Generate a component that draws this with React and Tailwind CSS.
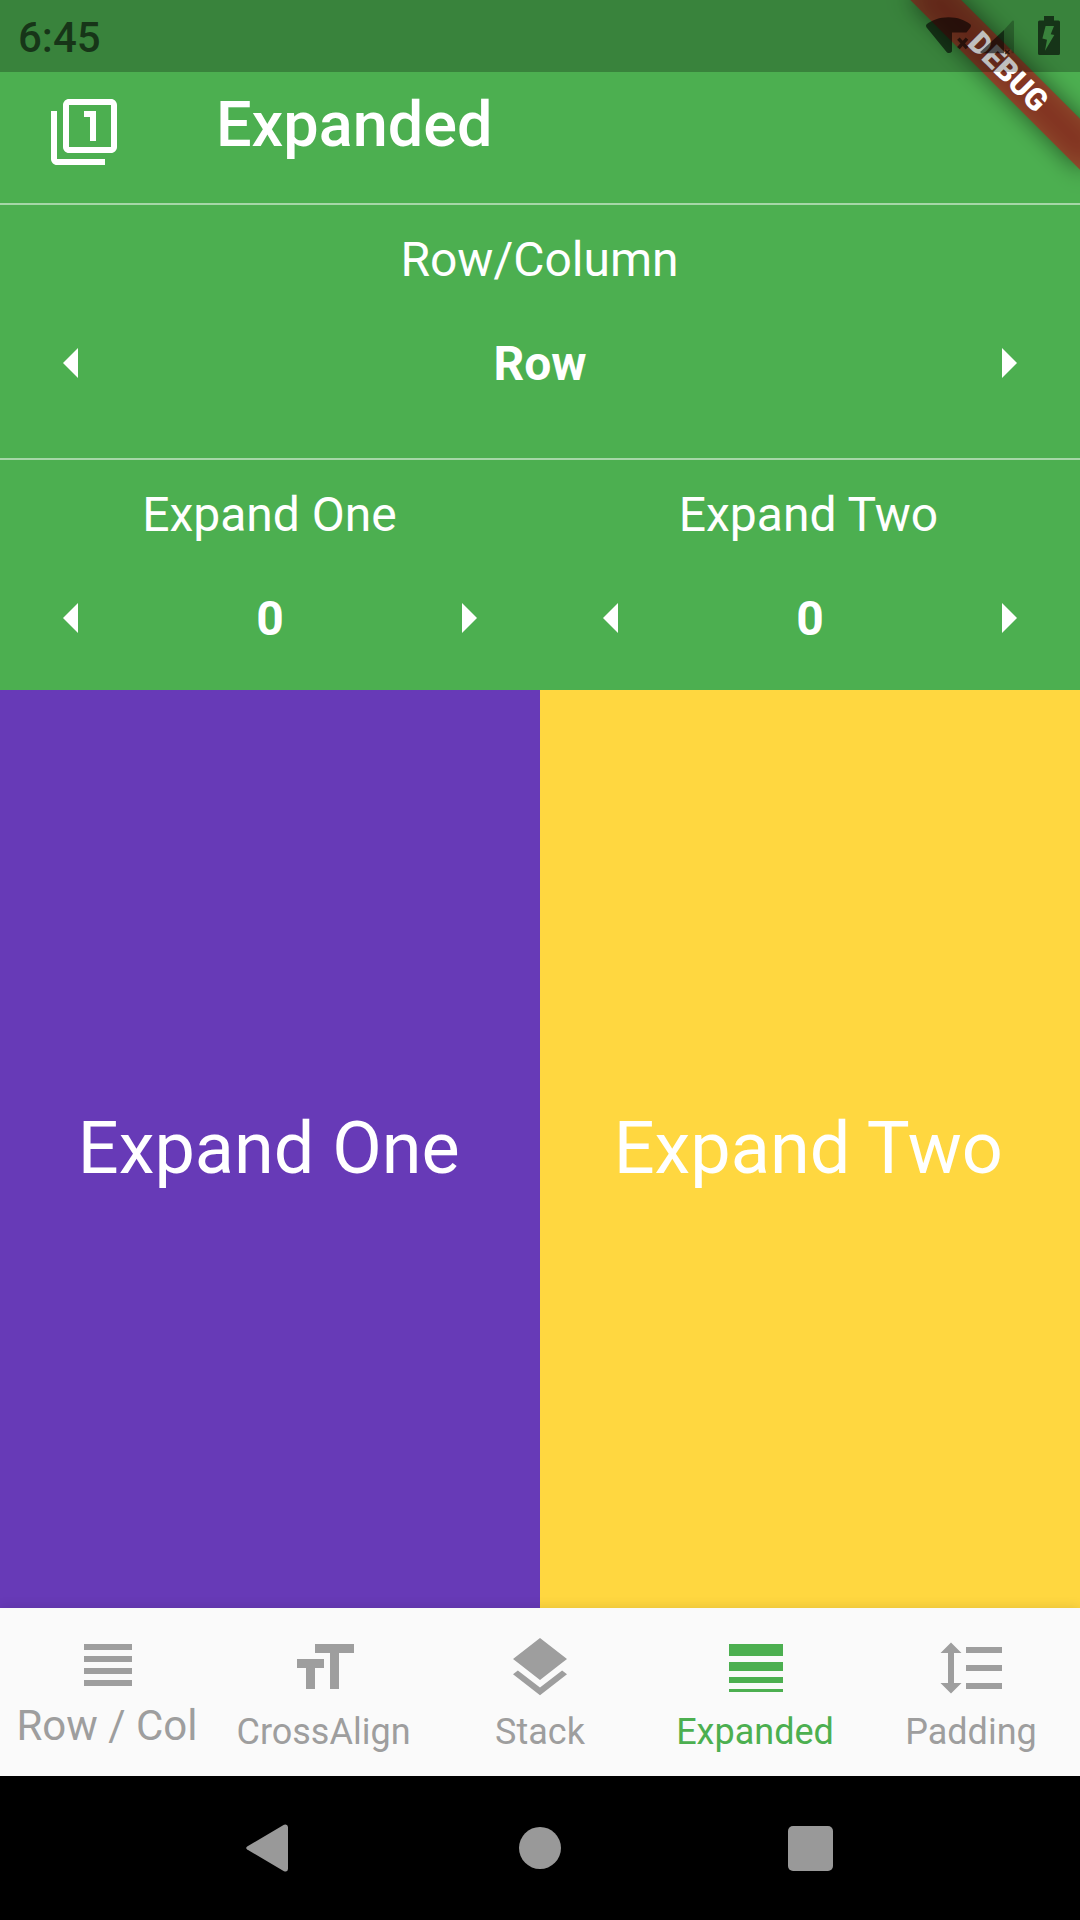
import React from "react";

const ICONS = {
  filterOne:
    "M3 5H1v16c0 1.1.9 2 2 2h16v-2H3V5zm11 10h2V5h-4v2h2v8zm7-14H7c-1.1 0-2 .9-2 2v14c0 1.1.9 2 2 2h14c1.1 0 2-.9 2-2V3c0-1.1-.9-2-2-2zm0 16H7V3h14v14z",
  arrowLeft: "M14 7l-5 5 5 5V7z",
  arrowRight: "M10 17l5-5-5-5v10z",
  headline: "M4 15h16v-2H4v2zm0 4h16v-2H4v2zm0-8h16V9H4v2zm0-6v2h16V5H4z",
  formatSize: "M9 4v3h5v12h3V7h5V4H9zm-6 8h3v7h3v-7h3V9H3v3z",
  layers:
    "M11.99 18.54l-7.37-5.73L3 14.07l9 7 9-7-1.63-1.27-7.38 5.74zM12 16l7.36-5.73L21 9l-9-7-9 7 1.63 1.27L12 16z",
  lineWeight: "M3 17h18v-2H3v2zm0 3h18v-1H3v1zm0-7h18v-3H3v3zm0-9v4h18V4H3z",
  lineSpacing:
    "M6 7h2.5L5 3.5 1.5 7H4v10H1.5L5 20.5 8.5 17H6V7zm4-2v2h12V5H10zm0 14h12v-2H10v2zm0-6h12v-2H10v2z",
};

function Icon({ name, className = "" }) {
  return (
    <svg viewBox="0 0 24 24" className={`size-[72px] shrink-0 fill-current ${className}`} aria-hidden="true">
      <path d={ICONS[name]} />
    </svg>
  );
}

function StatusBar() {
  return (
    <div className="absolute inset-x-0 top-0 flex h-[72px] items-start justify-between bg-black/25 text-black/60">
      <span className="pt-[13px] pl-[18px] text-[42px] leading-[49px] font-medium">6:45</span>
      <svg width="160" height="72" viewBox="920 0 160 72" className="fill-current" aria-hidden="true">
        {/* wifi without connection */}
        <path d="M926.6 24.2C932 20 939.500 17.200 948.500 17.200S965 20 970.400 24.200Q971.600 25.500 970.600 27.200L966.500 32.500H952V51.500Q949.500 54.200 946.800 52.200L926.400 27.200Q925.400 25.500 926.600 24.200Z" />
        <path d="M958.400 38.600L967 48.200M967 38.600L958.400 48.200" fill="none" stroke="currentColor" strokeWidth="3.500" />
        {/* mobile signal */}
        <path d="M1004 30V53.300H981.500Q979.600 52.700 980.700 51.500Z" />
        <path d="M1004 30L1012.300 20.800Q1013.600 20 1014 21.500V53.300H1011.500V49.500H1004Z" fillOpacity="0.4" />
        <path d="M1005 50L1009.500 54M1009.500 50L1005 54" fill="none" stroke="currentColor" strokeWidth="1.200" />
        {/* charging battery */}
        <path
          fillRule="evenodd"
          d="M1044 16H1054V20.500H1058.500Q1060 20.500 1060 22V53.500Q1060 55 1058.500 55H1039.500Q1038 55 1038 53.500V22Q1038 20.500 1039.500 20.500H1044ZM1045.600 26L1042.400 38.500L1047 39.700L1045 50.700L1054.300 35L1050.700 34.300L1054 26Z"
        />
      </svg>
    </div>
  );
}

function DebugBanner() {
  return (
    <div className="absolute top-[84px] right-[-120px] h-[36px] w-[240px] origin-[120px_-84px] rotate-45">
      <div className="absolute inset-0 bg-black/50 blur-[11.900px]" />
      <div className="relative flex h-full items-center justify-center bg-[#b71c1c]/63 text-[30.600px] leading-none font-black text-white">
        DEBUG
      </div>
    </div>
  );
}

function Selector({ label, value, labelClass = "" }) {
  return (
    <div className="flex min-w-0 flex-1 flex-col pt-[26px] text-center text-[48px] leading-[57px] text-white">
      <div className={labelClass}>{label}</div>
      <div className="mt-[3px] flex h-[144px] items-center justify-between px-[36px]">
        <Icon name="arrowLeft" />
        <span className="pt-px font-bold">{value}</span>
        <Icon name="arrowRight" />
      </div>
    </div>
  );
}

function NavItem({ icon, label, active = false, large = false, labelClass = "pr-[2px]" }) {
  return (
    <div
      className={`flex flex-1 flex-col items-center whitespace-nowrap ${
        large ? "pt-[21px] text-[42px] leading-[49px]" : "pt-[24px] text-[36px] leading-[42px]"
      } ${active ? "text-[#4caf50]" : "text-[#9e9e9e]"}`}
    >
      <Icon name={icon} />
      <span className={`${large ? "" : "mt-[7px]"} ${labelClass}`}>{label}</span>
    </div>
  );
}

export default function App() {
  return (
    <div className="relative flex h-[1920px] w-[1080px] flex-col overflow-hidden bg-[#4caf50] font-['Roboto',sans-serif]">
      <header className="flex h-[203px] shrink-0 items-start pl-[48px] text-white">
        <Icon name="filterOne" className="mt-[96px]" />
        <h1 className="mt-[87px] ml-[96px] text-[63px] leading-[75px] font-medium">Expanded</h1>
      </header>

      <section className="flex h-[255px] shrink-0 border-t-2 border-white/50">
        <Selector label="Row/Column" value="Row" labelClass="pr-px" />
      </section>
      <section className="flex h-[232px] shrink-0 border-t-2 border-white/50">
        <Selector label="Expand One" value="0" labelClass="pr-px" />
        <Selector label="Expand Two" value="0" labelClass="pr-[3px]" />
      </section>

      <main className="flex h-[918px] shrink-0 text-[72px] leading-[85px] text-white">
        <div className="flex flex-1 items-center justify-center bg-[#673ab7] pr-[2px] pb-[2px]">Expand One</div>
        <div className="flex flex-1 items-center justify-center bg-[#ffd740] pr-[3px] pb-[2px]">Expand Two</div>
      </main>

      <nav className="relative flex h-[168px] shrink-0 bg-[#fafafa] shadow-[0_0_12px_rgba(0,0,0,0.12)]">
        <NavItem icon="headline" label="Row / Col" large />
        <NavItem icon="formatSize" label="CrossAlign" labelClass="pr-px" />
        <NavItem icon="layers" label="Stack" labelClass="" />
        <NavItem icon="lineWeight" label="Expanded" active />
        <NavItem icon="lineSpacing" label="Padding" />
      </nav>

      <div className="relative flex h-[144px] shrink-0 items-center justify-between bg-black px-[243px] text-[#999]">
        <svg width="48" height="48" viewBox="0 0 48 48" className="fill-current" aria-hidden="true">
          <path d="M4.200 22.500L41 0.800Q44.500 -0.500 45 3V45Q44.500 48.500 41 47.200L4.200 25.500Q2.200 24 4.200 22.500Z" />
        </svg>
        <div className="absolute left-1/2 size-[42px] -translate-x-1/2 rounded-full bg-current" />
        <div className="mr-[4.500px] size-[45px] rounded-[5px] bg-current" />
      </div>

      <DebugBanner />
      <StatusBar />
    </div>
  );
}
